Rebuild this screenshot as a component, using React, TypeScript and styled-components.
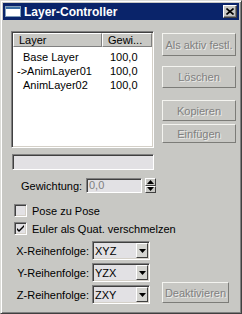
import { Fragment } from "react";
import styled, { createGlobalStyle } from "styled-components";

const GlobalStyle = createGlobalStyle`
  html, body {
    margin: 0;
    padding: 0;
    background: #c8c8c4;
  }
  * {
    box-sizing: border-box;
  }
`;

const Window = styled.div`
  width: 242px;
  height: 314px;
  background: #c8c8c4;
  border: 1px solid;
  border-color: #dcdcd8 #404040 #404040 #dcdcd8;
  box-shadow: inset 1px 1px #ffffff, inset -1px -1px #808080;
  padding: 2px;
  display: flex;
  flex-direction: column;
  font-family: "Liberation Sans", Arial, sans-serif;
  font-size: 11px;
  color: #000;
`;

const TitleBar = styled.div`
  height: 17px;
  background: #0a246a;
  display: flex;
  align-items: center;
  padding: 0 2px;
`;

const Title = styled.span`
  margin-left: 3px;
  color: #fff;
  font-weight: bold;
  font-size: 12px;
`;

const CloseButton = styled.div`
  margin-left: auto;
  width: 14px;
  height: 13px;
  background: #c8c8c4;
  border: 1px solid;
  border-color: #ffffff #404040 #404040 #ffffff;
  box-shadow: inset -1px -1px #808080;
  display: flex;
  align-items: center;
  justify-content: center;
`;

const Body = styled.div`
  padding: 11px 0 0 8px;
  display: flex;
  flex-direction: column;
`;

const TopRow = styled.div`
  display: flex;
  gap: 8px;
`;

const ListView = styled.div`
  width: 143px;
  height: 117px;
  background: #fff;
  border: 1px solid;
  border-color: #808080 #ffffff #ffffff #808080;
  box-shadow: inset 1px 1px #404040, inset -1px -1px #d4d0c8;
  padding: 1px;
`;

const ListHeader = styled.div`
  display: grid;
  grid-template-columns: 89px 1fr;
  height: 14px;
`;

const HeaderCell = styled.div`
  background: #c8c8c4;
  border: 1px solid;
  border-color: #ffffff #808080 #808080 #ffffff;
  padding-left: 5px;
  line-height: 12px;
  white-space: nowrap;
  overflow: hidden;
`;

const ListRows = styled.div`
  padding-top: 3px;
`;

const ListRow = styled.div`
  display: grid;
  grid-template-columns: 89px 1fr;
  height: 14px;
  line-height: 14px;
`;

const NameCell = styled.span<{ $active?: boolean }>`
  padding-left: ${(p) => (p.$active ? "4px" : "10px")};
  white-space: nowrap;
`;

const ValueCell = styled.span`
  padding-left: 8px;
`;

const ButtonColumn = styled.div`
  display: flex;
  flex-direction: column;
  width: 74px;
`;

const SideButton = styled.div<{ $h: number; $mt: number; $w?: number }>`
  height: ${(p) => p.$h}px;
  width: ${(p) => (p.$w ? `${p.$w}px` : "100%")};
  margin-top: ${(p) => p.$mt}px;
  border: 1px solid;
  border-color: #f4f4f0 #7c7c78 #7c7c78 #f4f4f0;
  display: flex;
  align-items: center;
  justify-content: center;
  color: #808080;
  text-shadow: 1px 1px 0 #ececea;
  white-space: nowrap;
`;

const WideField = styled.div`
  margin: 6px 0 0 1px;
  width: 142px;
  height: 16px;
  background: #e2e1e4;
  border: 1px solid;
  border-color: #808080 #ffffff #ffffff #808080;
  box-shadow: inset 1px 1px #404040;
`;

const WeightRow = styled.div`
  display: flex;
  align-items: center;
  margin-top: 8px;
  height: 15px;
`;

const WeightLabel = styled.span`
  margin-left: 10px;
  width: 65px;
`;

const SunkenInput = styled.div`
  width: 56px;
  height: 15px;
  background: #e2e1e4;
  border: 1px solid;
  border-color: #808080 #ffffff #ffffff #808080;
  box-shadow: inset 1px 1px #404040;
  color: #808080;
  padding-left: 2px;
  line-height: 13px;
`;

const Spinner = styled.div`
  margin-left: 3px;
  width: 11px;
  height: 15px;
  display: flex;
  flex-direction: column;
`;

const SpinButton = styled.div`
  flex: 1;
  background: #c8c8c4;
  border: 1px solid;
  border-color: #ffffff #404040 #404040 #ffffff;
  display: flex;
  align-items: center;
  justify-content: center;
`;

const CheckRow = styled.div<{ $mt: number }>`
  display: flex;
  align-items: center;
  gap: 5px;
  margin: ${(p) => p.$mt}px 0 0 3px;
  height: 13px;
`;

const CheckBox = styled.div`
  width: 13px;
  height: 13px;
  background: #e2e1e4;
  border: 1px solid;
  border-color: #808080 #ffffff #ffffff #808080;
  box-shadow: inset 1px 1px #404040, inset -1px -1px #d4d0c8;
  display: flex;
  align-items: center;
  justify-content: center;
`;

const OrderGrid = styled.div`
  display: grid;
  grid-template-columns: 78px 58px 67px;
  grid-auto-rows: 19px;
  column-gap: 3px;
  row-gap: 3px;
  margin-top: 6px;
  align-items: center;
`;

const OrderLabel = styled.span`
  grid-column: 1;
  text-align: right;
  white-space: nowrap;
`;

const Select = styled.div`
  grid-column: 2;
  height: 19px;
  background: #e2e1e4;
  border: 1px solid;
  border-color: #808080 #ffffff #ffffff #808080;
  box-shadow: inset 1px 1px #404040, inset -1px -1px #d4d0c8;
  display: flex;
  align-items: center;
  padding: 2px 1px 2px 2px;
`;

const SelectText = styled.span`
  flex: 1;
`;

const SelectArrow = styled.div`
  width: 12px;
  height: 15px;
  background: #d4d4d0;
  border: 1px solid;
  border-color: #ffffff #404040 #404040 #ffffff;
  display: flex;
  align-items: center;
  justify-content: center;
`;

const DeactivateCell = styled.div`
  grid-column: 3;
  grid-row: 3;
  align-self: end;
  margin-left: 9px;
  margin-bottom: 1px;
`;

const layers = [
  { name: "Base Layer", weight: "100,0", active: false },
  { name: "AnimLayer01", weight: "100,0", active: true },
  { name: "AnimLayer02", weight: "100,0", active: false },
];

const orders = [
  { label: "X-Reihenfolge:", value: "XYZ" },
  { label: "Y-Reihenfolge:", value: "YZX" },
  { label: "Z-Reihenfolge:", value: "ZXY" },
];

function WindowIcon() {
  return (
    <svg width="16" height="11" viewBox="0 0 16 11">
      <rect x="0.5" y="0.5" width="15" height="10" fill="#fff" stroke="#7f9db9" />
      <rect x="1" y="1" width="14" height="2" fill="#3a6ea5" />
    </svg>
  );
}

function Arrow({ up }: { up?: boolean }) {
  return (
    <svg width="7" height="4" viewBox="0 0 7 4">
      <path d={up ? "M3.5 0 L7 4 L0 4 Z" : "M0 0 L7 0 L3.5 4 Z"} fill="#000" />
    </svg>
  );
}

function App() {
  return (
    <>
      <GlobalStyle />
      <Window>
        <TitleBar>
          <WindowIcon />
          <Title>Layer-Controller</Title>
          <CloseButton>
            <svg width="8" height="7" viewBox="0 0 8 7">
              <path d="M0.5 0.5 L7.5 6.5 M7.5 0.5 L0.5 6.5" stroke="#000" strokeWidth="1.6" />
            </svg>
          </CloseButton>
        </TitleBar>
        <Body>
          <TopRow>
            <ListView>
              <ListHeader>
                <HeaderCell>Layer</HeaderCell>
                <HeaderCell>Gewi...</HeaderCell>
              </ListHeader>
              <ListRows>
                {layers.map((l) => (
                  <ListRow key={l.name}>
                    <NameCell $active={l.active}>
                      {l.active ? `->${l.name}` : l.name}
                    </NameCell>
                    <ValueCell>{l.weight}</ValueCell>
                  </ListRow>
                ))}
              </ListRows>
            </ListView>
            <ButtonColumn>
              <SideButton $h={23} $mt={2}>Als aktiv festl.</SideButton>
              <SideButton $h={22} $mt={10}>Löschen</SideButton>
              <SideButton $h={21} $mt={12}>Kopieren</SideButton>
              <SideButton $h={19} $mt={3}>Einfügen</SideButton>
            </ButtonColumn>
          </TopRow>
          <WideField />
          <WeightRow>
            <WeightLabel>Gewichtung:</WeightLabel>
            <SunkenInput>0,0</SunkenInput>
            <Spinner>
              <SpinButton>
                <Arrow up />
              </SpinButton>
              <SpinButton>
                <Arrow />
              </SpinButton>
            </Spinner>
          </WeightRow>
          <CheckRow $mt={11}>
            <CheckBox />
            <span>Pose zu Pose</span>
          </CheckRow>
          <CheckRow $mt={5}>
            <CheckBox>
              <svg width="7" height="7" viewBox="0 0 7 7">
                <path d="M0 3 L0 5 L2 7 L7 2 L7 0 L2 5 Z" fill="#000" />
              </svg>
            </CheckBox>
            <span>Euler als Quat. verschmelzen</span>
          </CheckRow>
          <OrderGrid>
            {orders.map((o) => (
              <Fragment key={o.label}>
                <OrderLabel>{o.label}</OrderLabel>
                <Select>
                  <SelectText>{o.value}</SelectText>
                  <SelectArrow>
                    <Arrow />
                  </SelectArrow>
                </Select>
              </Fragment>
            ))}
            <DeactivateCell>
              <SideButton $h={21} $mt={0} $w={67}>
                Deaktivieren
              </SideButton>
            </DeactivateCell>
          </OrderGrid>
        </Body>
      </Window>
    </>
  );
}

export default App;
